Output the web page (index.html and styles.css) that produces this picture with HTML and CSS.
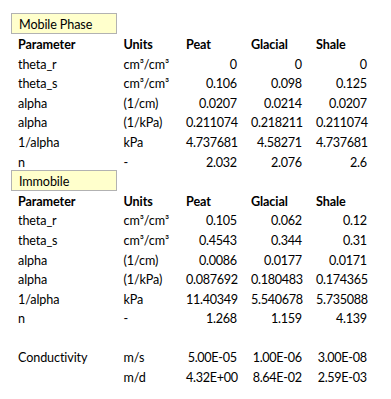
FILE: index.html
```html
<!DOCTYPE html>
<html>
<head>
<meta charset="utf-8">
<link rel="stylesheet" href="styles.css">
</head>
<body>
<div class="sheet">
  <div class="row"><div class="cell note">Mobile Phase</div></div>
  <div class="row head"><div class="cell">Parameter</div><div class="cell">Units</div><div class="cell">Peat</div><div class="cell">Glacial</div><div class="cell">Shale</div></div>
  <div class="row"><div class="cell">theta_r</div><div class="cell">cm³/cm³</div><div class="cell num">0</div><div class="cell num">0</div><div class="cell num">0</div></div>
  <div class="row"><div class="cell">theta_s</div><div class="cell">cm³/cm³</div><div class="cell num">0.106</div><div class="cell num">0.098</div><div class="cell num">0.125</div></div>
  <div class="row"><div class="cell">alpha</div><div class="cell">(1/cm)</div><div class="cell num">0.0207</div><div class="cell num">0.0214</div><div class="cell num">0.0207</div></div>
  <div class="row"><div class="cell">alpha</div><div class="cell">(1/kPa)</div><div class="cell num">0.211074</div><div class="cell num">0.218211</div><div class="cell num">0.211074</div></div>
  <div class="row"><div class="cell">1/alpha</div><div class="cell">kPa</div><div class="cell num">4.737681</div><div class="cell num">4.58271</div><div class="cell num">4.737681</div></div>
  <div class="row"><div class="cell">n</div><div class="cell">-</div><div class="cell num">2.032</div><div class="cell num">2.076</div><div class="cell num">2.6</div></div>
  <div class="row"><div class="cell note">Immobile</div></div>
  <div class="row head"><div class="cell">Parameter</div><div class="cell">Units</div><div class="cell">Peat</div><div class="cell">Glacial</div><div class="cell">Shale</div></div>
  <div class="row"><div class="cell">theta_r</div><div class="cell">cm³/cm³</div><div class="cell num">0.105</div><div class="cell num">0.062</div><div class="cell num">0.12</div></div>
  <div class="row"><div class="cell">theta_s</div><div class="cell">cm³/cm³</div><div class="cell num">0.4543</div><div class="cell num">0.344</div><div class="cell num">0.31</div></div>
  <div class="row"><div class="cell">alpha</div><div class="cell">(1/cm)</div><div class="cell num">0.0086</div><div class="cell num">0.0177</div><div class="cell num">0.0171</div></div>
  <div class="row"><div class="cell">alpha</div><div class="cell">(1/kPa)</div><div class="cell num">0.087692</div><div class="cell num">0.180483</div><div class="cell num">0.174365</div></div>
  <div class="row"><div class="cell">1/alpha</div><div class="cell">kPa</div><div class="cell num">11.40349</div><div class="cell num">5.540678</div><div class="cell num">5.735088</div></div>
  <div class="row"><div class="cell">n</div><div class="cell">-</div><div class="cell num">1.268</div><div class="cell num">1.159</div><div class="cell num">4.139</div></div>
  <div class="row"></div>
  <div class="row"><div class="cell">Conductivity</div><div class="cell">m/s</div><div class="cell num">5.00E-05</div><div class="cell num">1.00E-06</div><div class="cell num">3.00E-08</div></div>
  <div class="row"><div class="cell"></div><div class="cell">m/d</div><div class="cell num">4.32E+00</div><div class="cell num">8.64E-02</div><div class="cell num">2.59E-03</div></div>
</div>
</body>
</html>
```
FILE: styles.css
```css
html, body {
  margin: 0;
  padding: 0;
  background: #ffffff;
}
.sheet {
  padding: 14px 0 0 11px;
  font-family: Lato, "Liberation Sans", sans-serif;
  font-size: 12.6px;
  color: #000000;
}
.row {
  display: grid;
  grid-template-columns: 105.5px 62.5px 65px 65px 65px;
  height: 19.6px;
  line-height: 19.6px;
}
.cell {
  padding: 1.4px 7px 0 7px;
  white-space: nowrap;
  box-sizing: border-box;
  letter-spacing: -0.1px;
}
.head .cell {
  font-weight: bold;
}
.num {
  text-align: right;
  letter-spacing: -0.3px;
  padding-right: 7.3px;
}
.note {
  background: #ffffcc;
  border: 1px solid #b2b2b2;
  height: 21px;
  margin-top: -1px;
  padding: 0.8px 7px 0 7px;
  line-height: 19px;
}
```
